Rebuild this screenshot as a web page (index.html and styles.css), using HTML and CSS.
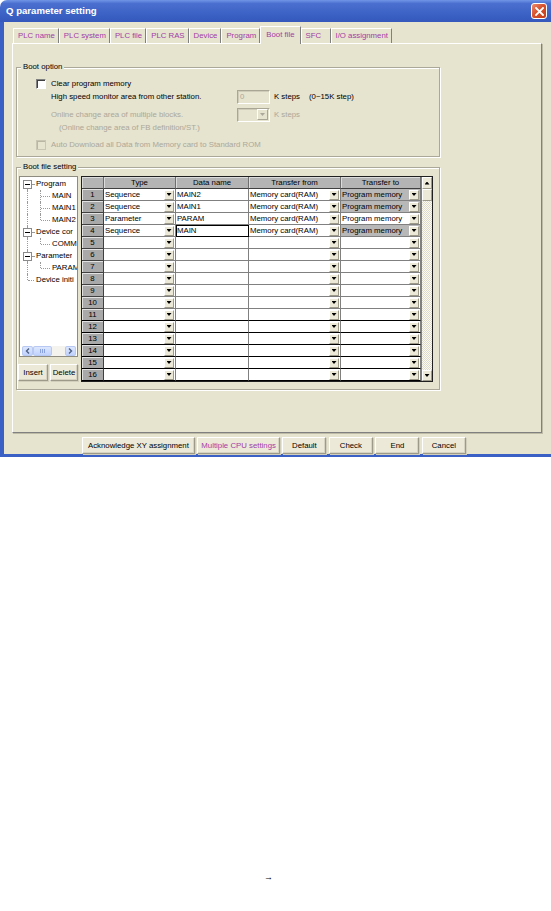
FILE: index.html
```html
<!DOCTYPE html>
<html>
<head>
<meta charset="utf-8">
<title>Q parameter setting</title>
<link rel="stylesheet" href="styles.css">
</head>
<body>
<div class="window">
  <div class="titlebar">
    <span class="title">Q parameter setting</span>
    <span class="close"><svg width="9" height="9" viewBox="0 0 9 9"><path d="M1 1L8 8M8 1L1 8" stroke="#fff" stroke-width="1.8" stroke-linecap="square"/></svg></span>
  </div>
  <div class="frame">
    <div class="tabs">
      <span class="tab">PLC name</span>
      <span class="tab">PLC system</span>
      <span class="tab">PLC file</span>
      <span class="tab">PLC RAS</span>
      <span class="tab">Device</span>
      <span class="tab">Program</span>
      <span class="tab active">Boot file</span>
      <span class="tab">SFC</span>
      <span class="tab">I/O assignment</span>
    </div>
    <div class="panel">
      <fieldset class="group opt">
        <legend>Boot option</legend>
        <div class="orow r1"><span class="chk"></span><span>Clear program memory</span></div>
        <div class="orow r2"><span class="lbl">High speed monitor area from other station.</span><span class="edit">0</span><span class="unit">K steps</span><span class="range">(0~15K step)</span></div>
        <div class="orow r3 dis"><span class="lbl">Online change area of multiple blocks.</span><span class="combo"><span class="cbtn"></span></span><span class="unit">K steps</span></div>
        <div class="orow r4 dis"><span>(Online change area of FB definition/ST.)</span></div>
        <div class="orow r5 dis"><span class="chk off"></span><span>Auto Download all Data from Memory card to Standard ROM</span></div>
      </fieldset>
      <fieldset class="group file">
        <legend>Boot file setting</legend>
        <div class="file-body">
          <div class="leftcol">
            <div class="tree">
              <div class="titems">
                <div class="tn"><span class="c1 box first"><i></i></span><span class="tl">Program</span></div>
                <div class="tn"><span class="c1 v"></span><span class="c2 t"></span><span class="tl">MAIN</span></div>
                <div class="tn"><span class="c1 v"></span><span class="c2 t"></span><span class="tl">MAIN1</span></div>
                <div class="tn"><span class="c1 v"></span><span class="c2 l"></span><span class="tl">MAIN2</span></div>
                <div class="tn"><span class="c1 box mid"><i></i></span><span class="tl">Device cor</span></div>
                <div class="tn"><span class="c1 v"></span><span class="c2 l"></span><span class="tl">COMM</span></div>
                <div class="tn"><span class="c1 box mid"><i></i></span><span class="tl">Parameter</span></div>
                <div class="tn"><span class="c1 v"></span><span class="c2 l"></span><span class="tl">PARAM</span></div>
                <div class="tn"><span class="c1 l"></span><span class="tl">Device initi</span></div>
              </div>
              <div class="hscroll">
                <span class="sb"><svg width="5" height="6" viewBox="0 0 5 6"><path d="M4 0.5L1.5 3L4 5.5" fill="none" stroke="#4d6185" stroke-width="1.4"/></svg></span>
                <span class="sthumb"><svg width="5" height="4" viewBox="0 0 5 4"><path d="M0.5 0V4M2.5 0V4M4.5 0V4" stroke="#8aa3de" stroke-width="1"/></svg></span>
                <span class="strack"></span>
                <span class="sb"><svg width="5" height="6" viewBox="0 0 5 6"><path d="M1 0.5L3.5 3L1 5.5" fill="none" stroke="#4d6185" stroke-width="1.4"/></svg></span>
              </div>
            </div>
            <div class="tbtns"><span class="btn ins">Insert</span><span class="btn del">Delete</span></div>
          </div>
          <div class="gridwrap">
            <div class="grid">
              <div class="row"><div class="cell hd"></div><div class="cell hd">Type</div><div class="cell hd">Data name</div><div class="cell hd">Transfer from</div><div class="cell hd">Transfer to</div></div>
              <div class="row"><div class="cell rn">1</div><div class="cell"><span class="tx">Sequence</span><span class="dd"></span></div><div class="cell"><span class="tx">MAIN2</span></div><div class="cell"><span class="tx">Memory card(RAM)</span><span class="dd"></span></div><div class="cell gr"><span class="tx">Program memory</span><span class="dd"></span></div></div>
              <div class="row"><div class="cell rn">2</div><div class="cell"><span class="tx">Sequence</span><span class="dd"></span></div><div class="cell"><span class="tx">MAIN1</span></div><div class="cell"><span class="tx">Memory card(RAM)</span><span class="dd"></span></div><div class="cell gr"><span class="tx">Program memory</span><span class="dd"></span></div></div>
              <div class="row"><div class="cell rn">3</div><div class="cell"><span class="tx">Parameter</span><span class="dd"></span></div><div class="cell"><span class="tx">PARAM</span></div><div class="cell"><span class="tx">Memory card(RAM)</span><span class="dd"></span></div><div class="cell"><span class="tx">Program memory</span><span class="dd"></span></div></div>
              <div class="row"><div class="cell rn">4</div><div class="cell"><span class="tx">Sequence</span><span class="dd"></span></div><div class="cell focus"><span class="tx">MAIN</span></div><div class="cell"><span class="tx">Memory card(RAM)</span><span class="dd"></span></div><div class="cell gr"><span class="tx">Program memory</span><span class="dd"></span></div></div>
              <div class="row"><div class="cell rn">5</div><div class="cell"><span class="tx"></span><span class="dd"></span></div><div class="cell"></div><div class="cell"><span class="tx"></span><span class="dd"></span></div><div class="cell"><span class="tx"></span><span class="dd"></span></div></div>
              <div class="row"><div class="cell rn">6</div><div class="cell"><span class="tx"></span><span class="dd"></span></div><div class="cell"></div><div class="cell"><span class="tx"></span><span class="dd"></span></div><div class="cell"><span class="tx"></span><span class="dd"></span></div></div>
              <div class="row"><div class="cell rn">7</div><div class="cell"><span class="tx"></span><span class="dd"></span></div><div class="cell"></div><div class="cell"><span class="tx"></span><span class="dd"></span></div><div class="cell"><span class="tx"></span><span class="dd"></span></div></div>
              <div class="row"><div class="cell rn">8</div><div class="cell"><span class="tx"></span><span class="dd"></span></div><div class="cell"></div><div class="cell"><span class="tx"></span><span class="dd"></span></div><div class="cell"><span class="tx"></span><span class="dd"></span></div></div>
              <div class="row"><div class="cell rn">9</div><div class="cell"><span class="tx"></span><span class="dd"></span></div><div class="cell"></div><div class="cell"><span class="tx"></span><span class="dd"></span></div><div class="cell"><span class="tx"></span><span class="dd"></span></div></div>
              <div class="row"><div class="cell rn">10</div><div class="cell"><span class="tx"></span><span class="dd"></span></div><div class="cell"></div><div class="cell"><span class="tx"></span><span class="dd"></span></div><div class="cell"><span class="tx"></span><span class="dd"></span></div></div>
              <div class="row dk"><div class="cell rn">11</div><div class="cell"><span class="tx"></span><span class="dd"></span></div><div class="cell"></div><div class="cell"><span class="tx"></span><span class="dd"></span></div><div class="cell"><span class="tx"></span><span class="dd"></span></div></div>
              <div class="row dk"><div class="cell rn">12</div><div class="cell"><span class="tx"></span><span class="dd"></span></div><div class="cell"></div><div class="cell"><span class="tx"></span><span class="dd"></span></div><div class="cell"><span class="tx"></span><span class="dd"></span></div></div>
              <div class="row dk"><div class="cell rn">13</div><div class="cell"><span class="tx"></span><span class="dd"></span></div><div class="cell"></div><div class="cell"><span class="tx"></span><span class="dd"></span></div><div class="cell"><span class="tx"></span><span class="dd"></span></div></div>
              <div class="row dk"><div class="cell rn">14</div><div class="cell"><span class="tx"></span><span class="dd"></span></div><div class="cell"></div><div class="cell"><span class="tx"></span><span class="dd"></span></div><div class="cell"><span class="tx"></span><span class="dd"></span></div></div>
              <div class="row dk"><div class="cell rn">15</div><div class="cell"><span class="tx"></span><span class="dd"></span></div><div class="cell"></div><div class="cell"><span class="tx"></span><span class="dd"></span></div><div class="cell"><span class="tx"></span><span class="dd"></span></div></div>
              <div class="row dk"><div class="cell rn">16</div><div class="cell"><span class="tx"></span><span class="dd"></span></div><div class="cell"></div><div class="cell"><span class="tx"></span><span class="dd"></span></div><div class="cell"><span class="tx"></span><span class="dd"></span></div></div>
            </div>
            <div class="vscroll"><span class="vbtn up"></span><span class="vthumb"></span><span class="vtrack"></span><span class="vbtn down"></span></div>
          </div>
        </div>
      </fieldset>
    </div>
    <div class="buttons">
      <span class="btn ack">Acknowledge XY assignment</span>
      <span class="btn purple">Multiple CPU settings</span>
      <span class="btn">Default</span>
      <span class="btn">Check</span>
      <span class="btn">End</span>
      <span class="btn">Cancel</span>
    </div>
  </div>
</div>
<div class="note">→</div>
</body>
</html>
```

FILE: styles.css
```css
* { box-sizing: border-box; }
html, body { margin: 0; padding: 0; background: #fff; }
body {
  width: 551px;
  height: 911px;
  overflow: hidden;
  font-family: "Liberation Sans", Arial, sans-serif;
  font-size: 7.8px;
  line-height: 10px;
  color: #000;
}

.window { width: 551px; height: 457px; display: flex; flex-direction: column; }

.titlebar {
  height: 22px;
  flex: none;
  display: flex;
  align-items: center;
  justify-content: space-between;
  padding: 0 4px 0 6px;
  border-top-left-radius: 7px;
  background: linear-gradient(#7196e6, #4a6fd0 16%, #3d63c6 60%, #3458bb);
}
.title { color: #fff; font-weight: bold; font-size: 9.6px; line-height: 12px; }
.close {
  width: 16px; height: 16px;
  border: 1px solid #fff;
  border-radius: 3px;
  background: linear-gradient(135deg, #eb8c70, #d9532e 45%, #c23c18);
  display: flex; align-items: center; justify-content: center;
}

.frame {
  flex: 1;
  display: flex;
  flex-direction: column;
  background: #e6e3cf;
  border-left: 4px solid #3a60c5;
  border-bottom: 3px solid #3a60c5;
}

.tabs {
  display: flex;
  align-items: flex-end;
  height: 17px;
  margin: 4px 0 0 9px;
  position: relative;
  z-index: 1;
}
.tab {
  height: 15px;
  min-width: 30px;
  padding: 0 3px 0 4px;
  line-height: 14px;
  color: #a23ca6;
  white-space: nowrap;
  background: #e6e3cf;
  border: 1px solid #fff;
  border-right-color: #808080;
  border-bottom: none;
}
.tab.active { height: 18px; margin-bottom: -1px; padding: 0 5px 0 5px; line-height: 16px; }

.panel {
  margin-left: 8px;
  width: 530px;
  height: 390px;
  flex: none;
  border: 1px solid;
  border-color: #fff #808080 #808080 #fff;
  box-shadow: 1px 1px 0 #bdbaa6;
  padding: 18px 0 0 3px;
}

.group {
  margin: 0;
  padding: 0;
  min-width: 0;
  width: 424px;
  border: 1px solid #aca899;
  box-shadow: inset 1px 1px 0 #fff, 1px 1px 0 #fff;
}
.group legend {
  padding: 0 2px;
  margin-left: 4px;
  height: 10px;
  line-height: 10px;
  background: #e6e3cf;
}

.opt { padding: 6px 0 5px 0; }
.orow { display: flex; align-items: center; white-space: nowrap; }
.r1 { height: 11px; padding-left: 19px; }
.r2 { height: 15px; padding-left: 34px; }
.r3 { height: 15px; margin-top: 3px; padding-left: 34px; }
.r4 { height: 12px; padding-left: 42px; }
.r5 { height: 12px; margin-top: 5px; padding-left: 19px; }
.dis { color: #aca899; }
.chk {
  width: 10px; height: 10px; flex: none;
  margin-right: 5px;
  background: #fff;
  border: 1px solid;
  border-color: #808080 #fff #fff #808080;
  box-shadow: inset 1px 1px 0 #404040;
}
.chk.off { background: #e6e3cf; border-color: #c9c6b4; box-shadow: inset 1px 1px 0 #b9b6a4; }
.lbl { width: 186px; flex: none; }
.edit {
  width: 33px; height: 14px; flex: none;
  padding-left: 2px;
  line-height: 12px;
  color: #aca899;
  background: #e6e3cf;
  border: 1px solid;
  border-color: #a9a696 #fff #fff #a9a696;
  box-shadow: inset 1px 1px 0 #cfccba;
}
.combo {
  width: 33px; height: 14px; flex: none;
  display: flex; justify-content: flex-end; align-items: center;
  padding-right: 1px;
  background: #e6e3cf;
  border: 1px solid;
  border-color: #a9a696 #fff #fff #a9a696;
  box-shadow: inset 1px 1px 0 #cfccba;
}
.cbtn {
  width: 11px; height: 11px;
  display: flex; align-items: center; justify-content: center;
  border: 1px solid; border-color: #fff #a9a696 #a9a696 #fff;
}
.cbtn::after { content: ""; width: 5px; height: 3px; background: #aca899; clip-path: polygon(0 0, 100% 0, 50% 100%); }
.unit { margin-left: 4px; }
.range { margin-left: 9px; }

.file { margin-top: 5px; padding: 4px 0 7px 0; }
.file-body { display: flex; align-items: flex-start; }
.leftcol { width: 60px; margin-left: 1px; display: flex; flex-direction: column; flex: none; }

.tree {
  width: 59px; height: 181px;
  margin-left: 1px;
  background: #fff;
  border: 1px solid #8e8c80;
  display: flex; flex-direction: column;
  overflow: hidden;
}
.titems { flex: 1; padding: 1px 0 0 1px; overflow: hidden; }
.tn { height: 12px; display: flex; white-space: nowrap; overflow: hidden; }
.tl { line-height: 12px; margin-left: 2px; min-width: 0; flex: 0 1 auto; overflow: hidden; }
.c1, .c2 { position: relative; flex: none; height: 12px; }
.c1 { width: 13px; }
.c2 { width: 16px; }
.v::before, .t::before, .l::before, .box::before {
  content: ""; position: absolute; left: 6px; top: 0; bottom: 0;
  border-left: 1px dotted #9a9a9a;
}
.l::before { bottom: 6px; }
.box.first::before { top: 6px; }
.t::after, .l::after, .box::after {
  content: ""; position: absolute; left: 7px; right: 0; top: 6px;
  border-top: 1px dotted #9a9a9a;
}
.box::after { left: 11px; }
.box i {
  position: absolute; left: 2px; top: 2px;
  width: 9px; height: 9px;
  background: #fff;
  border: 1px solid #8a8a8a;
  z-index: 1;
}
.box i::after { content: ""; position: absolute; left: 1px; top: 3px; width: 5px; height: 1px; background: #000; }

.hscroll { height: 10px; flex: none; display: flex; margin: 0 1px 0 2px; background: #f4f3ee; }
.sb, .sthumb {
  display: flex; align-items: center; justify-content: center;
  border: 1px solid #b7c9f3;
  border-radius: 2px;
  background: linear-gradient(#dde7fe, #c1d2fb);
}
.sb { width: 11px; }
.sthumb { width: 19px; }
.strack { flex: 1; }

.tbtns { display: flex; gap: 2px; margin-top: 7px; }
.btn {
  height: 17px;
  display: flex; align-items: center; justify-content: center;
  padding: 0 3px;
  min-width: 44px;
  white-space: nowrap;
  background: #ece9d8;
  border: 1px solid;
  border-color: #fff #9d9a8a #9d9a8a #fff;
  box-shadow: 1px 1px 0 #d2cfbd, inset -1px -1px 0 #d6d3c2;
}
.btn.ack { padding: 0 5px; }
.tbtns .btn { min-width: 0; padding: 0; }
.ins { width: 30px; }
.del { width: 28px; }
.purple { color: #a23ca6; }

.gridwrap { display: flex; margin-left: 3px; border: 1px solid #202020; flex: none; }
.grid {
  display: grid;
  grid-template-columns: 22px 72px 73px 92px 80px;
  grid-auto-rows: 12px;
  width: 339px;
}
.row { display: contents; }
.cell {
  display: flex; align-items: center;
  overflow: hidden;
  white-space: nowrap;
  padding-left: 1px;
  background: #fff;
  border-right: 1px solid #808080;
  border-bottom: 1px solid #808080;
}
.row.dk .cell { border-bottom-color: #000; }
.tx { flex: 1; overflow: hidden; line-height: 10px; }
.cell.hd {
  justify-content: center;
  padding-left: 0;
  background: #b4b4b4;
  border-bottom-color: #404040;
  border-right-color: #6e6e6e;
  box-shadow: inset 1px 1px 0 #dcdcdc;
}
.cell.rn {
  justify-content: center;
  padding-left: 0;
  background: #a9a9a9;
  border-right-color: #404040;
  border-bottom-color: #404040;
  box-shadow: inset 1px 1px 0 #e2e2e2;
}
.cell.gr { background: #b8b8b8; }
.cell.focus { outline: 1px solid #000; outline-offset: -1px; }
.dd {
  width: 10px; height: 10px; flex: none;
  margin-right: 1px;
  display: flex; align-items: center; justify-content: center;
  background: #ece9d8;
  border: 1px solid;
  border-color: #fff #9d9a8a #9d9a8a #fff;
}
.dd::after { content: ""; width: 5px; height: 3px; background: #000; clip-path: polygon(0 0, 100% 0, 50% 100%); }

.vscroll { width: 11px; display: flex; flex-direction: column; border-left: 1px solid #808080; }
.vbtn, .vthumb {
  display: flex; align-items: center; justify-content: center;
  background: #ece9d8;
  border: 1px solid;
  border-color: #fff #9d9a8a #9d9a8a #fff;
}
.vbtn.up { height: 12px; }
.vthumb { height: 12px; }
.vbtn.down { height: 11px; }
.vtrack { flex: 1; background: repeating-conic-gradient(#dedbc8 0 25%, #fbfaf4 0 50%) 0 0 / 2px 2px; }
.vbtn.up::after { content: ""; width: 5px; height: 3px; background: #000; clip-path: polygon(50% 0, 100% 100%, 0 100%); }
.vbtn.down::after { content: ""; width: 5px; height: 3px; background: #000; clip-path: polygon(0 0, 100% 0, 50% 100%); }

.buttons { display: flex; gap: 2.5px; margin-top: 4px; padding-left: 78px; }

.note { margin-top: 415px; padding-left: 264px; font-size: 9px; line-height: 10px; color: #000; }
```
